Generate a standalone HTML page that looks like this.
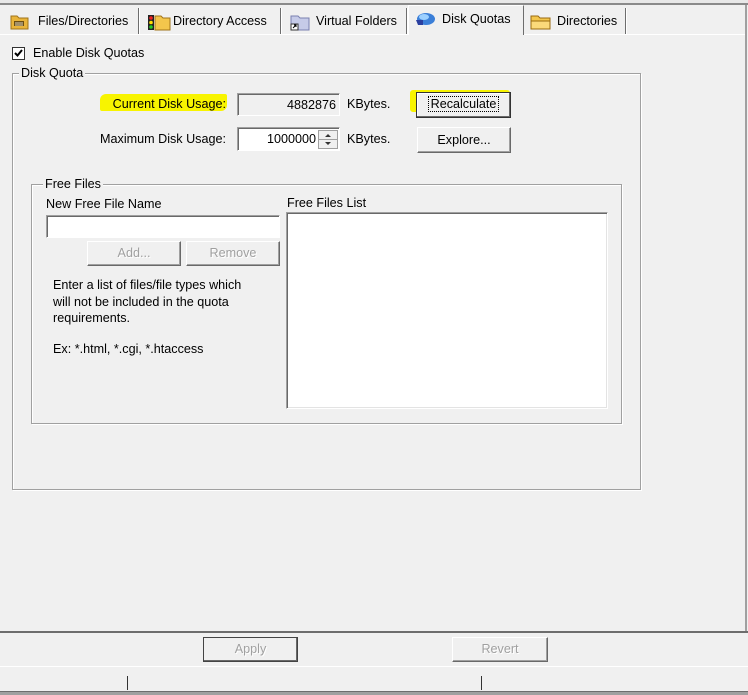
<!DOCTYPE html>
<html><head><style>
*{margin:0;padding:0;box-sizing:border-box}
body{width:748px;height:695px;background:#f0f0f0;font-family:"Liberation Sans",Arial,sans-serif;font-size:12.6px;color:#000;position:relative;overflow:hidden}
.a{position:absolute;white-space:nowrap}
.grp{position:absolute;border:1px solid #a0a0a0;box-shadow:1px 1px 0 #fff, inset 1px 1px 0 #fff}
.lbl{position:absolute;background:#f0f0f0;padding:0 2px;line-height:14px}
.edit{position:absolute;background:#fff;border-top:1px solid #a0a0a0;border-left:1px solid #a0a0a0;border-right:1px solid #fff;border-bottom:1px solid #fff;box-shadow:inset 1px 1px 0 #696969}
.btn{position:absolute;background:#f0f0f0;border-top:1px solid #fff;border-left:1px solid #fff;border-right:1px solid #696969;border-bottom:1px solid #696969;box-shadow:inset -1px -1px 0 #a0a0a0;text-align:center}
.dis{color:#a0a0a0;text-shadow:1px 1px 0 #fff}
.tab{position:absolute;top:8px;height:26px;line-height:26px;border-right:1px solid #6d6d6d;box-shadow:1px 0 0 #fff}
</style></head><body>
<div class="a" style="left:0;top:0;width:748px;height:3px;background:#e8e8e8"></div>
<div class="a" style="left:0;top:3px;width:748px;height:2px;background:#8a8a8a"></div>
<div class="a" style="left:0;top:34px;width:408px;height:1px;background:#fff"></div>
<div class="a" style="left:522px;top:34px;width:224px;height:1px;background:#fff"></div>
<div class="a" style="left:745px;top:5px;width:2px;height:627px;background:#a0a0a0"></div>
<div class="tab" style="left:6px;width:133px;padding-left:32px"><svg class="a" style="left:4px;top:5px" width="20" height="17"><path d="M1 3h6l2 2h9v11H1z" fill="#e9b43a" stroke="#a0741a"/><rect x="4" y="8" width="10" height="5" fill="#6b4d10"/><path d="M5 10h8M5 12h8" stroke="#fff" stroke-width=".8"/></svg>Files/Directories</div>
<div class="tab" style="left:141px;width:140px;padding-left:32px"><svg class="a" style="left:6px;top:5px" width="24" height="18"><path d="M8 3h6l2 2h7v12H8z" fill="#f3c64c" stroke="#a0741a"/><rect x="1" y="2" width="6" height="15" fill="#222"/><circle cx="4" cy="5" r="1.8" fill="#e22"/><circle cx="4" cy="9.5" r="1.8" fill="#fd0"/><circle cx="4" cy="14" r="1.8" fill="#2c2"/></svg>Directory Access</div>
<div class="tab" style="left:283px;width:124px;padding-left:33px"><svg class="a" style="left:6px;top:5px" width="22" height="18"><path d="M2 3h7l2 2h9v12H2z" fill="#c6cbe8" stroke="#7a80b0"/><rect x="2" y="11" width="7" height="6" fill="#fff" stroke="#333"/><path d="M4 15l3-3M5 12h2v2" stroke="#000" fill="none"/></svg>Virtual Folders</div>
<div class="a" style="left:408px;top:5px;width:116px;height:30px;background:#f0f0f0;border-left:1px solid #fff;border-top:1px solid #fff;border-right:1px solid #6d6d6d;line-height:26px;padding-left:33px">Disk Quotas<svg class="a" style="left:4px;top:5px" width="24" height="16"><ellipse cx="13" cy="8" rx="9" ry="6" fill="#3b7fd8"/><ellipse cx="11" cy="6" rx="5" ry="3" fill="#9cd0ff"/><path d="M3 9h7v5H5z" fill="#2a3fa0"/></svg></div>
<div class="tab" style="left:526px;width:100px;padding-left:31px"><svg class="a" style="left:4px;top:6px" width="22" height="16"><path d="M1 2h7l2 2h10v11H1z" fill="#f3c64c" stroke="#9a6a10"/><path d="M1 7h19v8H1z" fill="#fbd97a" stroke="#9a6a10"/></svg>Directories</div>
<div class="a" style="left:12px;top:47px;width:13px;height:13px;background:#fff;border:1px solid #333"><svg width="11" height="11" style="position:absolute;left:0;top:0"><path d="M2 5l2.5 2.5L9 2" stroke="#000" stroke-width="2" fill="none"/></svg></div>
<div class="a" style="left:33px;top:46px">Enable Disk Quotas</div>
<div class="grp" style="left:12px;top:73px;width:629px;height:417px"></div>
<div class="lbl" style="left:19px;top:66px">Disk Quota</div>
<div class="a" style="left:100px;top:94px;width:127px;height:17px;background:#f8f400;border-radius:6px 2px 6px 2px"></div>
<div class="a" style="left:90px;top:97px;width:136px;text-align:right">Current Disk Usage:</div>
<div class="edit" style="left:237px;top:93px;width:103px;height:23px;background:#f0f0f0;text-align:right;padding:4px 3px 0 0">4882876</div>
<div class="a" style="left:347px;top:97px">KBytes.</div>
<div class="a" style="left:410px;top:90px;width:100px;height:22px;background:#f8f400;border-radius:3px"></div>
<div class="btn" style="left:416px;top:92px;width:95px;height:26px;line-height:22px;border:1px solid #333;box-shadow:inset -1px -1px 0 #696969,inset 1px 1px 0 #fff"><span style="border:1px dotted #000;padding:0 2px">Recalculate</span></div>
<div class="a" style="left:50px;top:132px;width:176px;text-align:right">Maximum Disk Usage:</div>
<div class="edit" style="left:237px;top:127px;width:103px;height:24px;text-align:right;padding:4px 23px 0 0">1000000</div>
<div class="a" style="left:318px;top:130px;width:20px;height:19px;background:#f0f0f0;border:1px solid #a0a0a0"><svg width="18" height="17" style="position:absolute"><path d="M6 6l3-3 3 3zM6 11l3 3 3-3z" fill="#333"/><path d="M0 8.5h18" stroke="#a0a0a0"/></svg></div>
<div class="a" style="left:347px;top:132px">KBytes.</div>
<div class="btn" style="left:417px;top:127px;width:94px;height:26px;line-height:24px">Explore...</div>
<div class="grp" style="left:31px;top:184px;width:591px;height:240px"></div>
<div class="lbl" style="left:43px;top:177px">Free Files</div>
<div class="a" style="left:46px;top:197px">New Free File Name</div>
<div class="edit" style="left:46px;top:215px;width:234px;height:23px"></div>
<div class="btn dis" style="left:87px;top:241px;width:94px;height:25px;line-height:23px">Add...</div>
<div class="btn dis" style="left:186px;top:241px;width:94px;height:25px;line-height:23px">Remove</div>
<div class="a" style="left:53px;top:277px;line-height:16.5px">Enter a list of files/file types which<br>will not be included in the quota<br>requirements.</div>
<div class="a" style="left:53px;top:342px">Ex: *.html, *.cgi, *.htaccess</div>
<div class="a" style="left:287px;top:196px">Free Files List</div>
<div class="edit" style="left:286px;top:212px;width:322px;height:197px;box-shadow:inset 1px 1px 0 #696969,inset -1px -1px 0 #e3e3e3"></div>
<div class="a" style="left:0;top:631px;width:748px;height:2px;background:#6d6d6d"></div>
<div class="btn dis" style="left:203px;top:637px;width:95px;height:25px;line-height:23px;border:1px solid #444;box-shadow:inset -1px -1px 0 #696969">Apply</div>
<div class="btn dis" style="left:452px;top:637px;width:96px;height:25px;line-height:23px">Revert</div>
<div class="a" style="left:0;top:666px;width:748px;height:1px;background:#fff"></div>
<div class="a" style="left:127px;top:676px;width:1px;height:14px;background:#333"></div>
<div class="a" style="left:481px;top:676px;width:1px;height:14px;background:#333"></div>
<div class="a" style="left:0;top:691px;width:748px;height:4px;background:#a0a0a0"></div>
<div class="a" style="left:0;top:691px;width:748px;height:1px;background:#6d6d6d"></div>
</body></html>
